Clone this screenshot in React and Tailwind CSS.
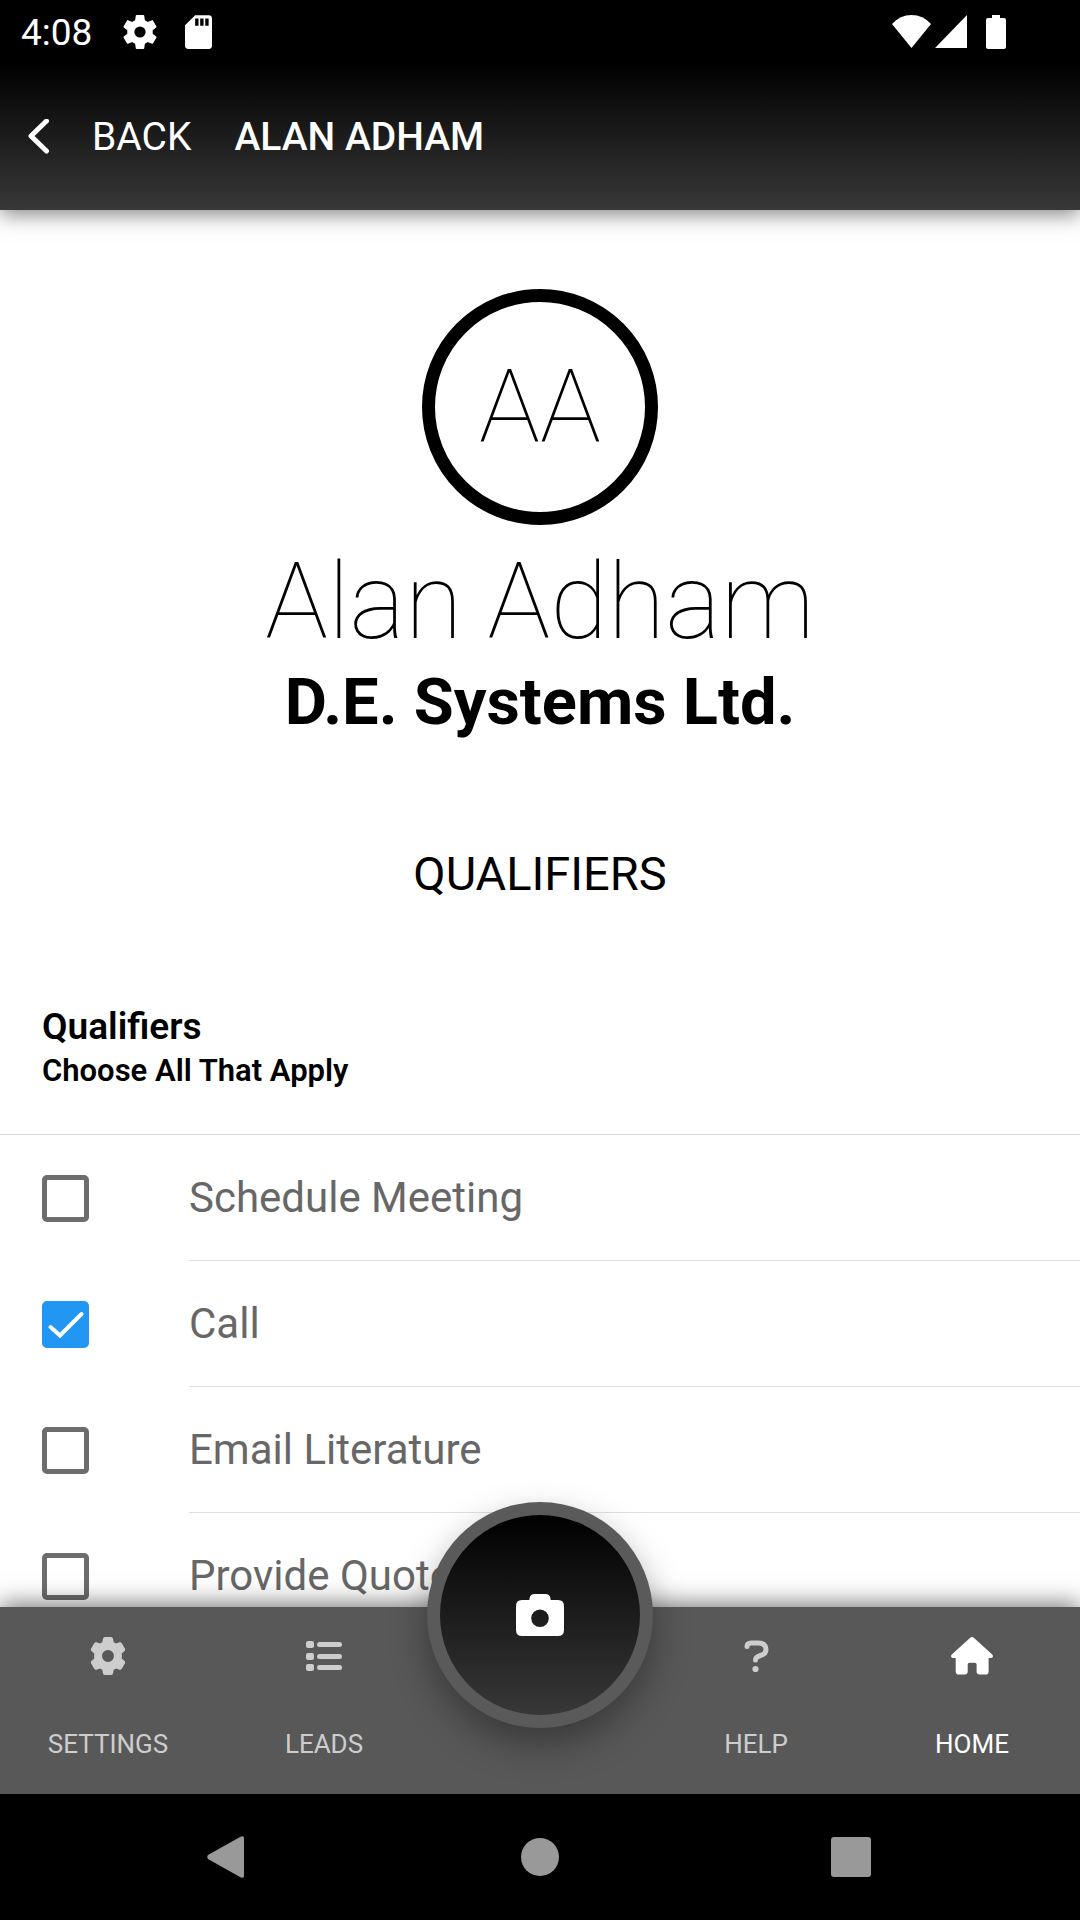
import { useState } from "react";

const QUALIFIERS = [
  { id: "meeting", label: "Schedule Meeting" },
  { id: "call", label: "Call" },
  { id: "literature", label: "Email Literature" },
  { id: "quote", label: "Provide Quote" },
];

function GearIcon({ className }) {
  return (
    <svg className={className} viewBox="2 2 20 20" fill="currentColor" aria-hidden="true">
      <path d="M19.5 12c0-.34-.03-.66-.07-.98l2.11-1.65a.5.5 0 0 0 .12-.64l-2-3.46a.5.5 0 0 0-.61-.22l-2.49 1a7.3 7.3 0 0 0-1.69-.98l-.38-2.65A.49.49 0 0 0 14 2h-4a.49.49 0 0 0-.49.42l-.38 2.65c-.61.25-1.17.59-1.69.98l-2.49-1a.49.49 0 0 0-.61.22l-2 3.46a.49.49 0 0 0 .12.64l2.11 1.65a7.9 7.9 0 0 0 0 1.96l-2.11 1.65a.5.5 0 0 0-.12.64l2 3.46c.12.22.39.3.61.22l2.49-1c.52.4 1.08.73 1.69.98l.38 2.65c.03.24.24.42.49.42h4c.25 0 .46-.18.49-.42l.38-2.65c.61-.25 1.17-.59 1.69-.98l2.49 1c.23.09.49 0 .61-.22l2-3.46a.5.5 0 0 0-.12-.64l-2.11-1.65c.04-.32.07-.64.07-.98ZM12 15.3a3.3 3.3 0 1 1 0-6.6 3.3 3.3 0 0 1 0 6.6Z" />
    </svg>
  );
}

function TabGearIcon() {
  return (
    <svg className="h-[38px] w-[38px]" viewBox="0 0 38 38" fill="currentColor" aria-hidden="true">
      <path
        fillRule="evenodd"
        d="M16 0h6q1.600 0 2 1.600l.7 3.700q1 .5 2.200 1.300l3.600-1.300q1.500-.4 2.300.9l3.200 5.500q.7 1.400-.4 2.400l-2.900 2.500q.2 1.200.2 2.400l-.2 2.400 2.900 2.500q1.100 1 .4 2.400l-3.200 5.500q-.8 1.300-2.300.9l-3.600-1.300q-1.200.8-2.200 1.300l-.7 3.700q-.4 1.600-2 1.600h-6q-1.600 0-2-1.600l-.7-3.700q-1-.5-2.200-1.300l-3.600 1.300q-1.500.4-2.300-.9L2 26.300q-.7-1.400.4-2.400l2.900-2.500Q5.100 20.200 5.100 19l.2-2.400-2.900-2.500Q1.300 13.100 2 11.700l3.200-5.500q.8-1.300 2.300-.9l3.600 1.300q1.200-.8 2.200-1.300L14 1.600Q14.400 0 16 0Zm3 13a6 6 0 1 0 0 12 6 6 0 0 0 0-12Z"
      />
    </svg>
  );
}

function ListIcon() {
  return (
    <svg className="h-[38px] w-[38px]" viewBox="0 0 38 38" fill="currentColor" aria-hidden="true">
      <rect x="1" y="4" width="8" height="7" rx="2" />
      <rect x="1" y="16" width="8" height="7" rx="2" />
      <rect x="1" y="27" width="8" height="7" rx="2" />
      <rect x="12" y="5" width="25" height="5" rx="2.500" />
      <rect x="12" y="17" width="25" height="5" rx="2.500" />
      <rect x="12" y="28" width="25" height="5" rx="2.500" />
    </svg>
  );
}

function HelpIcon() {
  return (
    <svg className="h-[38px] w-[38px]" viewBox="0 0 38 38" fill="none" aria-hidden="true">
      <path
        d="M10 9.500Q10 6 14.500 6H21Q29 6 29 12.500Q29 17 23.500 18.500Q18.500 20 18.500 23"
        stroke="currentColor"
        strokeWidth="5"
        strokeLinecap="round"
      />
      <circle cx="18.500" cy="32" r="3.100" fill="currentColor" />
    </svg>
  );
}

function HomeIcon() {
  return (
    <svg className="h-[38px] w-[42px]" viewBox="0 0 42 38" fill="currentColor" aria-hidden="true">
      <path d="M19.500.6q1.500-1.200 3 0L41.200 17.500q1 1.200.6 2.300-.4 1.200-1.800 1.200H37.600V34.500q0 3.100-3 3.100h-6q-3 0-3-3V27.500q0-1.800-1.800-1.800h-5.200q-1.900 0-1.900 1.800v7.100q0 3-3 3h-6q-3 0-3-3.100V21H2Q.6 21 .2 19.800-.2 18.700.8 17.500Z" />
    </svg>
  );
}

function CameraIcon() {
  return (
    <svg className="h-[42px] w-12" viewBox="0 0 48 42" fill="currentColor" aria-hidden="true">
      <path
        fillRule="evenodd"
        d="M18.500 0h11q4.500 0 5 4.500L34.700 6H42q6 0 6 6v24q0 6-6 6H6q-6 0-6-6V12q0-6 6-6h7.300l.2-1.500Q14 0 18.500 0ZM24 15.500a8.800 8.800 0 1 0 0 17.600 8.800 8.800 0 0 0 0-17.600Z"
      />
    </svg>
  );
}

function StatusBar() {
  return (
    <div className="flex h-[63px] items-center justify-between bg-black pr-[74px] pl-[21px]">
      <div className="flex items-center">
        <span className="pt-0.5 text-[37px] leading-[43px]">4:08</span>
        <GearIcon className="ml-[31px] h-[34px] w-[34px]" />
        <svg className="ml-7 h-[34px] w-[27px]" viewBox="0 0 16 20" fill="currentColor" aria-hidden="true">
          <path
            fillRule="evenodd"
            d="M6 0h8a2 2 0 0 1 2 2v16a2 2 0 0 1-2 2H2a2 2 0 0 1-2-2V6Zm0 2v4.300h2V2Zm3 0v4.300h2V2Zm3 0v4.300h2V2Z"
          />
        </svg>
      </div>
      <div className="flex items-center">
        <svg className="h-[34px] w-[39px]" viewBox="0 0 39 34" fill="currentColor" aria-hidden="true">
          <path d="M0 9Q8 0 19.500 0T39 9L19.500 33Z" />
        </svg>
        <svg className="ml-1 h-[34px] w-8" viewBox="0 0 32 34" fill="currentColor" aria-hidden="true">
          <path d="M32 0V33H0Z" />
        </svg>
        <svg className="ml-[19px] h-[34px] w-5" viewBox="0 0 20 34" fill="currentColor" aria-hidden="true">
          <path d="M6 0h8v3h4q2 0 2 2v27q0 2-2 2H2q-2 0-2-2V5q0-2 2-2h4Z" />
        </svg>
      </div>
    </div>
  );
}

function QualifierRow({ item, checked, onToggle }) {
  return (
    <li className="flex h-[126px] items-center pl-[42px]">
      <span className="grid shrink-0 place-items-center">
        <input
          id={item.id}
          type="checkbox"
          checked={checked}
          onChange={onToggle}
          className="col-start-1 row-start-1 h-[47px] w-[47px] appearance-none rounded-[5px] border-[5px] border-[#6d6d6d] checked:border-[#2196f3] checked:bg-[#2196f3]"
        />
        {checked && (
          <svg
            className="pointer-events-none col-start-1 row-start-1 h-[47px] w-[47px]"
            viewBox="0 0 47 47"
            fill="none"
            aria-hidden="true"
          >
            <path d="M8.500 26 18 34.500 39.500 13" stroke="white" strokeWidth="4" strokeLinecap="round" />
          </svg>
        )}
      </span>
      <label
        htmlFor={item.id}
        className="ml-[100px] flex h-full grow items-center border-b border-[#dfdfdf] text-[42px] leading-[49px] text-[#676767]"
      >
        {item.label}
      </label>
    </li>
  );
}

function Tab({ icon, label, active }) {
  return (
    <a
      href="#"
      className={`flex flex-1 flex-col items-center pt-[30px] ${active ? "text-white" : "text-[#cdcdcd]"}`}
    >
      {icon}
      <span className="mt-[54px] text-[26px] leading-[31px]">{label}</span>
    </a>
  );
}

export default function App() {
  const [selected, setSelected] = useState(["call"]);

  const toggle = (id) => {
    setSelected((prev) =>
      prev.includes(id) ? prev.filter((x) => x !== id) : [...prev, id]
    );
  };

  return (
    <div className="flex h-screen flex-col bg-white font-[Roboto,sans-serif] text-black">
      {/* Header */}
      <header className="relative z-10 shrink-0 text-white shadow-[0_4px_20px_rgba(0,0,0,0.5)]">
        <StatusBar />
        <div className="flex h-[147px] items-center bg-linear-to-b/srgb from-black to-[#383838] pl-7">
          <button type="button" className="flex items-center text-[39px] leading-[46px]">
            <svg className="h-9 w-[22px]" viewBox="0 0 22 36" fill="none" aria-hidden="true">
              <path
                d="M18.500 2 3 17 18.500 32"
                stroke="currentColor"
                strokeWidth="5"
                strokeLinecap="round"
                strokeLinejoin="round"
              />
            </svg>
            <span className="ml-[42px]">BACK</span>
          </button>
          <h1 className="ml-[43px] text-[39px] leading-[46px] font-medium">ALAN ADHAM</h1>
        </div>
      </header>

      {/* Contact */}
      <main className="min-h-0 flex-1 overflow-y-auto [scrollbar-width:none]">
        <section className="flex flex-col items-center pt-[79px] text-center">
          <div className="flex h-[236px] w-[236px] items-center justify-center rounded-full border-[13px] border-black text-[102px] font-thin">
            AA
          </div>
          <h2 className="mt-4 text-[105px] leading-[123px] font-thin">Alan Adham</h2>
          <p className="text-[65px] leading-[76px] font-bold">D.E. Systems Ltd.</p>
          <h3 className="mt-[106px] text-[47px] leading-[55px]">QUALIFIERS</h3>
        </section>

        <section className="mt-[104px]">
          <div className="border-b border-[#d8d8d8] px-[42px] pb-[45px] font-semibold">
            <h4 className="text-[37px] leading-[43px]">Qualifiers</h4>
            <p className="mt-1 text-[31px] leading-[37px]">Choose All That Apply</p>
          </div>
          <ul>
            {QUALIFIERS.map((item) => (
              <QualifierRow
                key={item.id}
                item={item}
                checked={selected.includes(item.id)}
                onToggle={() => toggle(item.id)}
              />
            ))}
          </ul>
        </section>
      </main>

      {/* Tab bar */}
      <nav className="relative z-10 flex h-[187px] shrink-0 bg-[#585858] shadow-[0_-4px_22px_rgba(0,0,0,0.5)]">
        <Tab icon={<TabGearIcon />} label="SETTINGS" />
        <Tab icon={<ListIcon />} label="LEADS" />
        <div className="relative flex-1">
          <button
            type="button"
            aria-label="Camera"
            className="absolute -top-[105px] left-1/2 flex h-[226px] w-[226px] -translate-x-1/2 rounded-full bg-[#5a5a5a] p-[13px] shadow-[0_16px_36px_rgba(0,0,0,0.35)]"
          >
            <span className="flex h-full w-full items-center justify-center rounded-full bg-linear-to-b/srgb from-black to-[#383838] text-white">
              <CameraIcon />
            </span>
          </button>
        </div>
        <Tab icon={<HelpIcon />} label="HELP" />
        <Tab icon={<HomeIcon />} label="HOME" active />
      </nav>

      {/* System navigation */}
      <footer className="relative z-20 flex h-[126px] shrink-0 items-center justify-between bg-black px-[207px] text-[#999999]">
        <button type="button" aria-label="System back">
          <svg className="h-[42px] w-[42px]" viewBox="0 0 42 42" fill="currentColor">
            <path d="M1 19 33.500.8Q37 -.8 37 2V40Q37 42.800 33.500 41.200L1 23Q-.5 21 1 19Z" />
          </svg>
        </button>
        <button type="button" aria-label="System home">
          <svg className="h-[42px] w-[42px]" viewBox="0 0 42 42" fill="currentColor">
            <circle cx="21" cy="21" r="19" />
          </svg>
        </button>
        <button type="button" aria-label="System overview">
          <svg className="h-[42px] w-[42px]" viewBox="0 0 42 42" fill="currentColor">
            <rect x="0" y="1" width="40" height="40" rx="3" />
          </svg>
        </button>
      </footer>
    </div>
  );
}
